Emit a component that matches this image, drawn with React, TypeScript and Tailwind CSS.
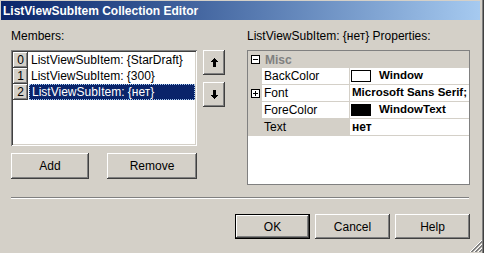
import React from "react";

const btn =
  "flex items-center justify-center bg-[#d4d0c8] text-[12px] text-black shadow-[inset_-1px_-1px_#404040,inset_1px_1px_#ffffff,inset_-2px_-2px_#808080,inset_2px_2px_#d4d0c8]";

const ArrowUp = () => (
  <svg width="7" height="9" viewBox="0 0 7 9" shapeRendering="crispEdges">
    <rect x="3" y="0" width="1" height="1" fill="#000" />
    <rect x="2" y="1" width="3" height="1" fill="#000" />
    <rect x="1" y="2" width="5" height="1" fill="#000" />
    <rect x="0" y="3" width="7" height="1" fill="#000" />
    <rect x="2" y="4" width="3" height="5" fill="#000" />
  </svg>
);

const ArrowDown = () => (
  <svg width="7" height="9" viewBox="0 0 7 9" shapeRendering="crispEdges">
    <rect x="2" y="0" width="3" height="5" fill="#000" />
    <rect x="0" y="5" width="7" height="1" fill="#000" />
    <rect x="1" y="6" width="5" height="1" fill="#000" />
    <rect x="2" y="7" width="3" height="1" fill="#000" />
    <rect x="3" y="8" width="1" height="1" fill="#000" />
  </svg>
);

const ExpandBox = ({ minus }: { minus?: boolean }) => (
  <svg width="9" height="9" viewBox="0 0 9 9" shapeRendering="crispEdges">
    <rect x="0.5" y="0.5" width="8" height="8" fill="#fff" stroke="#000" />
    <rect x="2" y="4" width="5" height="1" fill="#000" />
    {!minus && <rect x="4" y="2" width="1" height="5" fill="#000" />}
  </svg>
);

const members = [
  "ListViewSubItem: {StarDraft}",
  "ListViewSubItem: {300}",
  "ListViewSubItem: {нет}",
];

const props = [
  { name: "BackColor", swatch: "#ffffff", value: "Window" },
  { name: "Font", plus: true, value: "Microsoft Sans Serif;" },
  { name: "ForeColor", swatch: "#000000", value: "WindowText" },
  { name: "Text", value: "нет", selected: true },
];

export default function App() {
  return (
    <div className="relative flex h-[253px] w-[484px] flex-col overflow-hidden bg-[#d4d0c8] pl-[1px] pt-[1px] font-['Liberation_Sans',Arial,sans-serif] text-[12px] text-black shadow-[inset_-1px_0_#404040,inset_-2px_0_#808080]">
      {/* title bar */}
      <div className="flex h-[19px] w-[479px] items-center bg-gradient-to-r from-[#0a246a] to-[#a6caf0] pl-[2px] text-[12px] font-bold text-white">
        ListViewSubItem Collection Editor
      </div>

      <div className="flex pl-[10px] pt-[10px]">
        {/* members */}
        <div className="flex w-[186px] flex-col">
          <div className="h-[20px] leading-[13px]">Members:</div>
          <div className="h-[96px] bg-white p-[2px] shadow-[inset_1px_1px_#808080,inset_-1px_-1px_#ffffff,inset_2px_2px_#404040,inset_-2px_-2px_#d4d0c8]">
            {members.map((m, i) => (
              <div key={i} className="flex h-[16px]">
                <div className={`${btn} h-[16px] w-[15px] leading-none`}>{i}</div>
                <div
                  className={`ml-[1px] flex flex-1 items-center pl-[2px] ${
                    i === 2
                      ? "border border-dotted border-[#a6caf0] bg-[#0a246a] text-white"
                      : ""
                  }`}
                >
                  {m}
                </div>
              </div>
            ))}
          </div>
          <div className="mt-[7px] flex justify-between">
            <div className={`${btn} h-[26px] w-[78px]`}>Add</div>
            <div className={`${btn} h-[26px] w-[90px]`}>Remove</div>
          </div>
        </div>

        {/* up / down */}
        <div className="ml-[6px] flex w-[22px] flex-col gap-[7px] pt-[20px]">
          <div className={`${btn} h-[25px] w-[22px]`}>
            <ArrowUp />
          </div>
          <div className={`${btn} h-[25px] w-[22px]`}>
            <ArrowDown />
          </div>
        </div>

        {/* properties */}
        <div className="ml-[22px] flex w-[223px] flex-col">
          <div className="h-[20px] leading-[13px]">ListViewSubItem: {"{нет}"} Properties:</div>
          <div className="flex h-[135px] flex-col border border-[#808080] bg-white">
            <div className="flex h-[17px] items-center bg-[#d4d0c8]">
              <div className="flex w-[14px] justify-center pl-[1px]">
                <ExpandBox minus />
              </div>
              <span className="pl-[3px] font-bold text-[#808080]">Misc</span>
            </div>
            {props.map((p) => (
              <div key={p.name} className="flex h-[17px] border-b border-[#d4d0c8]">
                <div className="flex w-[14px] items-center justify-center bg-[#d4d0c8] pl-[1px]">
                  {p.plus && <ExpandBox />}
                </div>
                <div
                  className={`flex w-[88px] items-center border-r border-[#d4d0c8] pl-[2px] ${
                    p.selected ? "bg-[#d4d0c8]" : "bg-white"
                  }`}
                >
                  {p.name}
                </div>
                <div className="flex flex-1 items-center overflow-hidden whitespace-nowrap pl-[2px] text-[11.5px] font-bold">
                  {p.swatch && (
                    <div
                      className="-ml-[1px] mr-[8px] h-[12px] w-[20px] border border-black"
                      style={{ backgroundColor: p.swatch }}
                    />
                  )}
                  <span className={p.selected ? "text-[12px]" : ""}>{p.value}</span>
                </div>
              </div>
            ))}
          </div>
        </div>
      </div>

      {/* separator */}
      <div className="ml-[10px] mt-[12px] h-[2px] w-[458px] border-t border-b border-t-[#808080] border-b-white" />

      {/* dialog buttons */}
      <div className="mt-[15px] flex justify-end gap-[5px] pr-[14px]">
        <div className="h-[25px] w-[75px] border border-black">
          <div className={`${btn} h-full w-full`}>OK</div>
        </div>
        <div className={`${btn} h-[25px] w-[75px]`}>Cancel</div>
        <div className={`${btn} h-[25px] w-[75px]`}>Help</div>
      </div>

      {/* size grip */}
      <svg
        className="absolute bottom-[1px] right-[2px]"
        width="12"
        height="12"
        viewBox="0 0 12 12"
        shapeRendering="crispEdges"
      >
        {[0, 4, 8].map((o) => (
          <g key={o}>
            <line x1={12} y1={o} x2={o} y2={12} stroke="#ffffff" />
            <line x1={12} y1={o + 1} x2={o + 1} y2={12} stroke="#808080" />
            <line x1={12} y1={o + 2} x2={o + 2} y2={12} stroke="#808080" />
          </g>
        ))}
      </svg>
    </div>
  );
}
